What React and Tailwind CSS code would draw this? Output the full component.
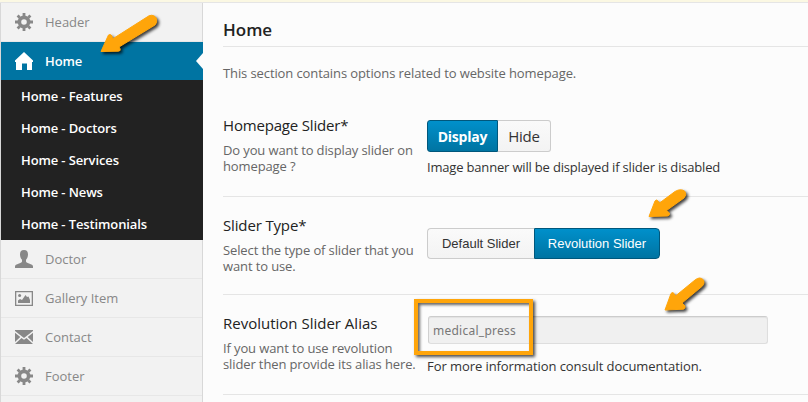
import React from "react";

function Gear() {
  return (
    <svg width="18" height="18" viewBox="0 0 18 18" fill="none" stroke="#888">
      <circle cx="9" cy="9" r="4.6" strokeWidth="3.6" />
      <g strokeWidth="2.8">
        <path d="M9 0v3M9 15v3M0 9h3M15 9h3M2.6 2.6l2.2 2.2M13.2 13.2l2.2 2.2M2.6 15.4l2.2-2.2M13.2 4.8l2.2-2.2" />
      </g>
    </svg>
  );
}

function House() {
  return (
    <svg width="18" height="18" viewBox="0 0 18 18" fill="#fff">
      <path d="M9 0 18 8.5V10h-1v8h-5v-6.500H7V18H1v-8H0V8.500z" />
    </svg>
  );
}

function Person() {
  return (
    <svg width="18" height="18" viewBox="0 0 18 18" fill="#888">
      <path d="M9 0c2.700 0 4 1.500 4 4.200 0 2.300-.8 4.300-2 5.500v1.800c0 .8 1 1.200 3 1.900 2.700.9 4 1.600 4 3.100V18H0v-1.500c0-1.500 1.300-2.200 4-3.100 2-.7 3-1.100 3-1.900V9.700C5.800 8.500 5 6.500 5 4.200 5 1.500 6.300 0 9 0z" />
    </svg>
  );
}

function Picture() {
  return (
    <svg width="18" height="15" viewBox="0 0 18 15" fill="#888">
      <path fillRule="evenodd" d="M0 0h18v15H0zM1.300 1.300v12.400h15.400V1.300z" />
      <circle cx="4.600" cy="4.500" r="1.500" />
      <path d="M3 12V9.500L5 8l2 1 3.500-5L12 6l1.500-.5L15 9v3z" />
    </svg>
  );
}

function Mail() {
  return (
    <svg width="18" height="14" viewBox="0 0 18 14" fill="#888">
      <path d="M0 0h18v1L9 8 0 1zM0 2.800 5.300 7 0 12zM18 2.800 12.700 7 18 12zM0 14l6.500-6L9 9.800 11.500 8l6.500 6z" />
    </svg>
  );
}

function MenuItem({ icon, label }) {
  return (
    <div className="flex h-[39px] items-center border-b border-[#e7e7e7] pl-[14px] text-[13px] font-medium text-[#888]">
      <span className="flex w-[30px] shrink-0">{icon}</span>
      <span className="mt-[2px] whitespace-nowrap">{label}</span>
    </div>
  );
}

function Arrow({ className, width, height, d }) {
  return (
    <svg className={className} width={width} height={height} overflow="visible">
      <path
        d={d}
        fill="#ffa50a"
        stroke="#ffa50a"
        strokeWidth="1"
        strokeLinejoin="round"
        className="drop-shadow-[2px_2px_1.5px_rgba(0,0,0,0.75)]"
      />
    </svg>
  );
}

function Label({ title, titleClass, children }) {
  return (
    <div className="-mt-px w-[204px] shrink-0 whitespace-nowrap">
      <h3 className={"text-[15px] leading-[20px] font-normal text-[#222] " + titleClass}>{title}</h3>
      <p className="mt-[7px] text-[13px] leading-[16px] tracking-[-0.12px] text-[#666]">{children}</p>
    </div>
  );
}

const subItems = ["Features", "Doctors", "Services", "News", "Testimonials"];

export default function App() {
  return (
    <div className="relative h-[402px] w-[808px] overflow-hidden bg-[#fcfcfc] font-['Open_Sans',sans-serif]">
      <div className="h-[3px] border-b border-[#e5e5e5] bg-[#fbf8e3]" />
      <div className="flex h-[399px]">
        <nav className="w-[203px] shrink-0 border-x border-[#d8d8d8] bg-[#f2f2f2]">
          <MenuItem icon={<Gear />} label="Header" />
          <div className="relative -mr-px flex h-[38px] items-center bg-[#0074a2] pl-[14px] text-[13px] font-semibold text-white">
            <span className="w-[30px]"><House /></span>
            <span className="mt-[2px] tracking-[-0.1px]">Home</span>
            <svg className="absolute top-[11px] right-0" width="7" height="16">
              <path d="M7 0v16L0 8z" fill="#fcfcfc" />
            </svg>
          </div>
          <div className="-mr-px bg-[#222]">
            {subItems.map((name) => (
              <div key={name} className="flex h-8 items-center pt-[2px] pl-5 text-[13px] font-semibold tracking-[-0.12px] text-white">
                Home - {name}
              </div>
            ))}
          </div>
          <MenuItem icon={<Person />} label="Doctor" />
          <MenuItem icon={<Picture />} label="Gallery Item" />
          <MenuItem icon={<Mail />} label="Contact" />
          <MenuItem icon={<Gear />} label="Footer" />
        </nav>

        <main className="min-w-0 flex-1 pl-5">
          <h2 className="flex h-[44px] items-center border-b border-[#e5e5e5] pt-[10px] text-[17px] font-semibold text-[#222]">
            Home
          </h2>
          <p className="mt-[16px] h-[20px] text-[13px] leading-[20px] tracking-[-0.1px] text-[#666]">
            This section contains options related to website homepage.
          </p>

          <section className="flex h-[114px] border-b border-[#e5e5e5] pt-[33px]">
            <Label title="Homepage Slider*" titleClass="tracking-[-0.18px]">
              Do you want to display slider on
              <br />
              homepage ?
            </Label>
            <div className="pt-[4px]">
              <div className="flex h-8">
                <button className="w-[71px] rounded-l-[3px] border border-[#00577c] bg-linear-to-b from-[#0090cb] to-[#0074a2] text-[14px] font-bold tracking-[-0.2px] text-white">
                  Display
                </button>
                <button className="w-[53px] rounded-r-[3px] border border-l-0 border-[#ccc] bg-linear-to-b from-[#fafafa] to-[#f3f3f3] text-[15px] tracking-[-0.2px] text-[#333]">
                  Hide
                </button>
              </div>
              <p className="mt-[6px] text-[13px] leading-[18px] tracking-[-0.18px] whitespace-nowrap text-[#333]">
                Image banner will be displayed if slider is disabled
              </p>
            </div>
          </section>

          <section className="flex h-[98px] border-b border-[#e5e5e5] pt-[19px]">
            <Label title="Slider Type*" titleClass="tracking-[-0.15px]">
              Select the type of slider that you
              <br />
              want to use.
            </Label>
            <div className="mt-[12px] flex h-[31px] font-['Liberation_Sans',Arial,sans-serif] text-[13px]">
              <button className="w-[107px] rounded-l-[4px] border border-r-0 border-[#ccc] bg-linear-to-b from-[#fafafa] to-[#f3f3f3] text-[#333]">
                Default Slider
              </button>
              <button className="w-[126px] rounded-r-[4px] border border-[#00577c] bg-linear-to-b from-[#0090cb] to-[#0074a2] text-white">
                Revolution Slider
              </button>
            </div>
          </section>

          <section className="flex h-[100px] border-b border-[#e5e5e5] pt-[19px]">
            <Label title="Revolution Slider Alias" titleClass="tracking-normal">
              If you want to use revolution
              <br />
              slider then provide its alias here.
            </Label>
            <div className="pt-[2px]">
              <div className="ml-px flex h-[28px] w-[340px] items-center rounded-[3px] border border-[#dedede] border-t-[#ccc] border-l-[#d0d0d0] bg-[#f0f0f0] pt-[2px] pl-[4px] font-['Noto_Sans',sans-serif] text-[12px] tracking-[0.25px] text-[#777] shadow-[inset_0_1px_1px_rgba(0,0,0,0.06)]">
                medical_press
              </div>
              <p className="mt-[13px] text-[13px] leading-[18px] tracking-[-0.07px] whitespace-nowrap text-[#333]">
                For more information consult documentation.
              </p>
            </div>
          </section>
        </main>
      </div>

      <div className="absolute top-[299px] left-[414px] h-[56px] w-[119px] border-4 border-[#ffa50a] shadow-[2px_2px_3px_rgba(0,0,0,0.7),inset_2px_2px_3px_rgba(0,0,0,0.6)]" />
      <Arrow
        className="absolute top-[14px] left-[100px]"
        width={60}
        height={40}
        d="M1 37.500 8.500 21Q10.500 19.500 12 22L12.500 25 49 1.800Q54 0 56.500 4.500 57.500 8.500 55 11L19 33 20 34.500Q21 37 18.500 37.200z"
      />
      <Arrow
        className="absolute top-[189px] left-[648px]"
        width={40}
        height={30}
        d="M1 27.500 7 12Q8.500 10 10 12L11.500 14 27 2.500Q33-1 37 2.500 39 6 36 9L18.500 21.500 21.500 24Q22 26.500 19.500 27z"
      />
      <Arrow
        className="absolute top-[277px] left-[664px]"
        width={45}
        height={36}
        d="M1 33 7 16.500Q8.500 14.500 10 16.500L11.500 19 31 3Q36-1 39.500 3 41 6 38.500 9L18 26 21 29Q21.500 31.500 19.500 32.200z"
      />
    </div>
  );
}
